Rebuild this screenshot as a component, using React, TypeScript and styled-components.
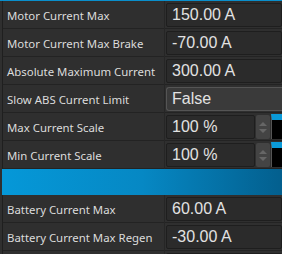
import React from 'react'
import styled, { createGlobalStyle } from 'styled-components'

type Param =
  | { kind: 'value'; label: string; value: string }
  | { kind: 'combo'; label: string; value: string }
  | { kind: 'spin'; label: string; value: string }
  | { kind: 'header' }

const PARAMS: Param[] = [
  { kind: 'value', label: 'Motor Current Max', value: '150.00 A' },
  { kind: 'value', label: 'Motor Current Max Brake', value: '-70.00 A' },
  { kind: 'value', label: 'Absolute Maximum Current', value: '300.00 A' },
  { kind: 'combo', label: 'Slow ABS Current Limit', value: 'False' },
  { kind: 'spin', label: 'Max Current Scale', value: '100 %' },
  { kind: 'spin', label: 'Min Current Scale', value: '100 %' },
  { kind: 'header' },
  { kind: 'value', label: 'Battery Current Max', value: '60.00 A' },
  { kind: 'value', label: 'Battery Current Max Regen', value: '-30.00 A' },
  { kind: 'value', label: '', value: '' },
]

function App() {
  return (
    <React.Fragment>
      <GlobalStyle />
      <Panel>
        {PARAMS.map((p, i) => {
          if (p.kind === 'header') return <GroupBar key={i} />
          return (
            <Row key={i}>
              <Label>{p.label}</Label>
              <Cell>
                {p.kind === 'value' && <ValueBox>{p.value}</ValueBox>}
                {p.kind === 'combo' && <ComboBox>{p.value}</ComboBox>}
                {p.kind === 'spin' && (
                  <SpinWrap>
                    <ValueBox>{p.value}</ValueBox>
                    <SpinButtons>
                      <Arrow $up />
                      <Arrow />
                    </SpinButtons>
                    <Meter />
                  </SpinWrap>
                )}
              </Cell>
            </Row>
          )
        })}
      </Panel>
    </React.Fragment>
  )
}

const GlobalStyle = createGlobalStyle`
  body {
    margin: 0;
    background: #2f2f2f;
    overflow: hidden;
  }
`

const Panel = styled.div`
  width: 282px;
  height: 254px;
  overflow: hidden;
  background: #2f2f2f;
  border-top: 1px solid #0a8fcc;
  padding-left: 2px;
  box-sizing: border-box;
  display: flex;
  flex-direction: column;
`

const Row = styled.div`
  display: grid;
  grid-template-columns: 162px 1fr;
  height: 28px;
  flex: 0 0 28px;
  box-sizing: border-box;
  border-bottom: 1px solid #232323;
  border-left: 1px solid #1f1f1f;
`

const Label = styled.div`
  display: flex;
  align-items: center;
  padding-left: 4px;
  font-family: 'Noto Sans', sans-serif;
  font-size: 11.4px;
  color: #dcdcdc;
  white-space: nowrap;
  overflow: hidden;
  border-right: 1px solid #262626;
`

const Cell = styled.div`
  display: flex;
  align-items: center;
  padding: 2px 0 2px 1px;
  min-width: 0;
`

const ValueBox = styled.div`
  flex: 1;
  height: 24px;
  box-sizing: border-box;
  background: #2b2b2b;
  border: 1px solid #1e1e1e;
  border-radius: 2px;
  display: flex;
  align-items: center;
  padding-left: 5px;
  font-family: 'Liberation Sans', Arial, sans-serif;
  font-size: 16px;
  color: #e2e2e2;
  white-space: nowrap;
`

const ComboBox = styled(ValueBox)`
  background: #3a3a3a;
  border: 1px solid #555555;
  border-right: none;
  border-radius: 3px 0 0 3px;
`

const SpinWrap = styled.div`
  flex: 1;
  display: flex;
  align-items: stretch;
  height: 24px;
`

const SpinButtons = styled.div`
  width: 14px;
  background: #444444;
  border-radius: 2px;
  margin-left: 1px;
  display: flex;
  flex-direction: column;
  align-items: center;
  justify-content: center;
  gap: 3px;
`

const Arrow = styled.div<{ $up?: boolean }>`
  width: 0;
  height: 0;
  border-left: 4px solid transparent;
  border-right: 4px solid transparent;
  ${(p) =>
    p.$up
      ? 'border-bottom: 4px solid #666666;'
      : 'border-top: 4px solid #666666;'}
`

const Meter = styled.div`
  width: 10px;
  margin-left: 1px;
  margin-top: -1px;
  background: #000000;
  border-top: 6px solid #0a9ad8;
  border-left: 1px solid #555;
`

const GroupBar = styled.div`
  height: 26px;
  flex: 0 0 26px;
  background: linear-gradient(90deg, #0598d8 0%, #0688c4 50%, #035f8e 100%);
`

export default App
